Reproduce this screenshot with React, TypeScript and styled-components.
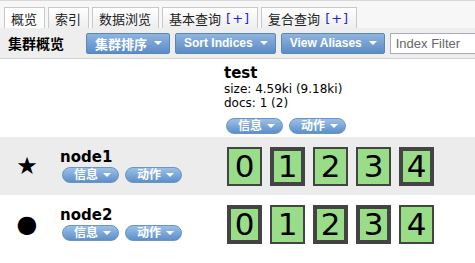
import * as React from 'react';
import styled, { createGlobalStyle } from 'styled-components';

const GlobalStyle = createGlobalStyle`
  body {
    margin: 0;
    background: #fff;
    font-family: "DejaVu Sans", Verdana, "Noto Sans CJK SC", sans-serif;
    color: #000;
  }
`;

const cjk = `"DejaVu Sans", "Noto Sans CJK SC", sans-serif`;
const latinBold = `"Liberation Sans", Arial, "Noto Sans CJK SC", sans-serif`;

const Page = styled.div`
  width: 475px;
  height: 263px;
  overflow: hidden;
`;

const TabBar = styled.div`
  display: flex;
  align-items: flex-end;
  gap: 3px;
  height: 28px;
  padding-left: 4px;
  box-sizing: border-box;
  background: #f7f7f7;
  border-top: 1px solid #d8d8d8;
`;

const Tab = styled.div<{ $active?: boolean }>`
  display: flex;
  align-items: center;
  flex-shrink: 0;
  height: 21px;
  padding: 0 7px 0 6px;
  box-sizing: border-box;
  border: 1px solid #c8c8c8;
  border-bottom: none;
  background: ${p => (p.$active ? '#fff' : 'linear-gradient(#ffffff, #eeeeee)')};
  font-family: ${cjk};
  font-size: 13px;
  color: #222;
  white-space: nowrap;
`;

const Plus = styled.span`
  color: #2222dd;
  margin-left: 5px;
  letter-spacing: 1px;
`;

const Toolbar = styled.div`
  display: flex;
  align-items: center;
  gap: 5px;
  height: 31px;
  padding-left: 8px;
  box-sizing: border-box;
  background: #eeeeee;
  border-bottom: 1px solid #cfd3d8;
  & > * { flex-shrink: 0; }
`;

const Title = styled.div`
  font-family: ${cjk};
  font-weight: bold;
  font-size: 14px;
  white-space: nowrap;
  margin-right: 17px;
`;

const MenuButton = styled.div`
  display: flex;
  align-items: center;
  gap: 7px;
  height: 21px;
  padding: 0 7px 0 8px;
  box-sizing: border-box;
  border: 1px solid #5b86b8;
  border-radius: 2px;
  background: linear-gradient(#8fb4df, #5a8cc6);
  color: #fff;
  font-family: ${latinBold};
  font-weight: bold;
  font-size: 12px;
  white-space: nowrap;
`;

const CjkLabel = styled.span`
  font-family: ${cjk};
  font-size: 13px;
`;

const Caret = styled.span`
  width: 0;
  height: 0;
  border-left: 4px solid transparent;
  border-right: 4px solid transparent;
  border-top: 4px solid #fff;
`;

const FilterInput = styled.input`
  height: 21px;
  width: 100px;
  box-sizing: border-box;
  border: 1px solid #aab;
  padding: 0 5px;
  font-family: "Liberation Sans", Arial, sans-serif;
  font-size: 13px;
  color: #555;
  background: #fff;
  &::placeholder { color: #666; }
`;

const Grid = styled.div`
  display: grid;
  grid-template-columns: 52px 170px 1fr;
`;

const Row = styled.div<{ $shaded?: boolean }>`
  display: contents;
  & > * { background: ${p => (p.$shaded ? '#ececec' : 'transparent')}; }
`;

const Cell = styled.div`
  display: flex;
  flex-direction: column;
  justify-content: center;
`;

const IconCell = styled(Cell)`
  align-items: center;
  height: 58px;
  font-size: 24px;
  padding-left: 2px;
`;

const IndexHeader = styled.div`
  padding: 6px 0 4px 2px;
  height: 78px;
  box-sizing: border-box;
`;

const IndexName = styled.div`
  font-weight: bold;
  font-size: 15px;
  line-height: 17px;
`;

const Meta = styled.div`
  font-size: 12px;
  line-height: 14px;
`;

const NodeName = styled.div`
  font-weight: bold;
  font-size: 15px;
  line-height: 17px;
  padding-left: 8px;
`;

const Pills = styled.div<{ $inset?: number; $top?: number }>`
  display: flex;
  gap: 6px;
  padding-left: ${p => p.$inset ?? 10}px;
  margin-top: ${p => p.$top ?? 1}px;
`;

const Pill = styled.div`
  display: flex;
  align-items: center;
  gap: 5px;
  height: 16px;
  padding: 0 7px 0 11px;
  box-sizing: border-box;
  border: 1px solid #6a95c6;
  border-radius: 9px;
  background: linear-gradient(#9cc0e8, #5d8fc8);
  color: #fff;
  font-family: ${cjk};
  font-weight: bold;
  font-size: 12px;
  line-height: 14px;
  white-space: nowrap;
`;

const Shards = styled.div`
  display: flex;
  align-items: center;
  gap: 8px;
  height: 58px;
  padding-left: 5px;
`;

const Shard = styled.div<{ $primary?: boolean }>`
  display: flex;
  align-items: center;
  justify-content: center;
  width: 35px;
  height: 39px;
  box-sizing: border-box;
  border: ${p => (p.$primary ? 4 : 2)}px solid #444;
  background: #99dd88;
  font-family: "DejaVu Sans", sans-serif;
  font-size: 31px;
  line-height: 1;
`;

const MenuPills = ({ inset, top }: { inset?: number; top?: number }) => (
  <Pills $inset={inset} $top={top}>
    <Pill>信息<Caret /></Pill>
    <Pill>动作<Caret /></Pill>
  </Pills>
);

const nodes = [
  { name: 'node1', icon: '★', primaries: [1, 4] },
  { name: 'node2', icon: '●', primaries: [0, 2, 3] },
];

export default function App() {
  return (
    <Page>
      <GlobalStyle />
      <TabBar>
        <Tab $active>概览</Tab>
        <Tab>索引</Tab>
        <Tab>数据浏览</Tab>
        <Tab>基本查询<Plus>[+]</Plus></Tab>
        <Tab>复合查询<Plus>[+]</Plus></Tab>
      </TabBar>
      <Toolbar>
        <Title>集群概览</Title>
        <MenuButton><CjkLabel>集群排序</CjkLabel><Caret /></MenuButton>
        <MenuButton>Sort Indices<Caret /></MenuButton>
        <MenuButton>View Aliases<Caret /></MenuButton>
        <FilterInput placeholder="Index Filter" />
      </Toolbar>
      <Grid>
        <Row>
          <div />
          <div />
          <IndexHeader>
            <IndexName>test</IndexName>
            <Meta>size: 4.59ki (9.18ki)</Meta>
            <Meta>docs: 1 (2)</Meta>
            <MenuPills inset={2} top={8} />
          </IndexHeader>
        </Row>
        {nodes.map((n, i) => (
          <Row key={n.name} $shaded={i === 0}>
            <IconCell>{n.icon}</IconCell>
            <Cell>
              <NodeName>{n.name}</NodeName>
              <MenuPills />
            </Cell>
            <Shards>
              {[0, 1, 2, 3, 4].map(s => (
                <Shard key={s} $primary={n.primaries.includes(s)}>{s}</Shard>
              ))}
            </Shards>
          </Row>
        ))}
      </Grid>
    </Page>
  );
}
